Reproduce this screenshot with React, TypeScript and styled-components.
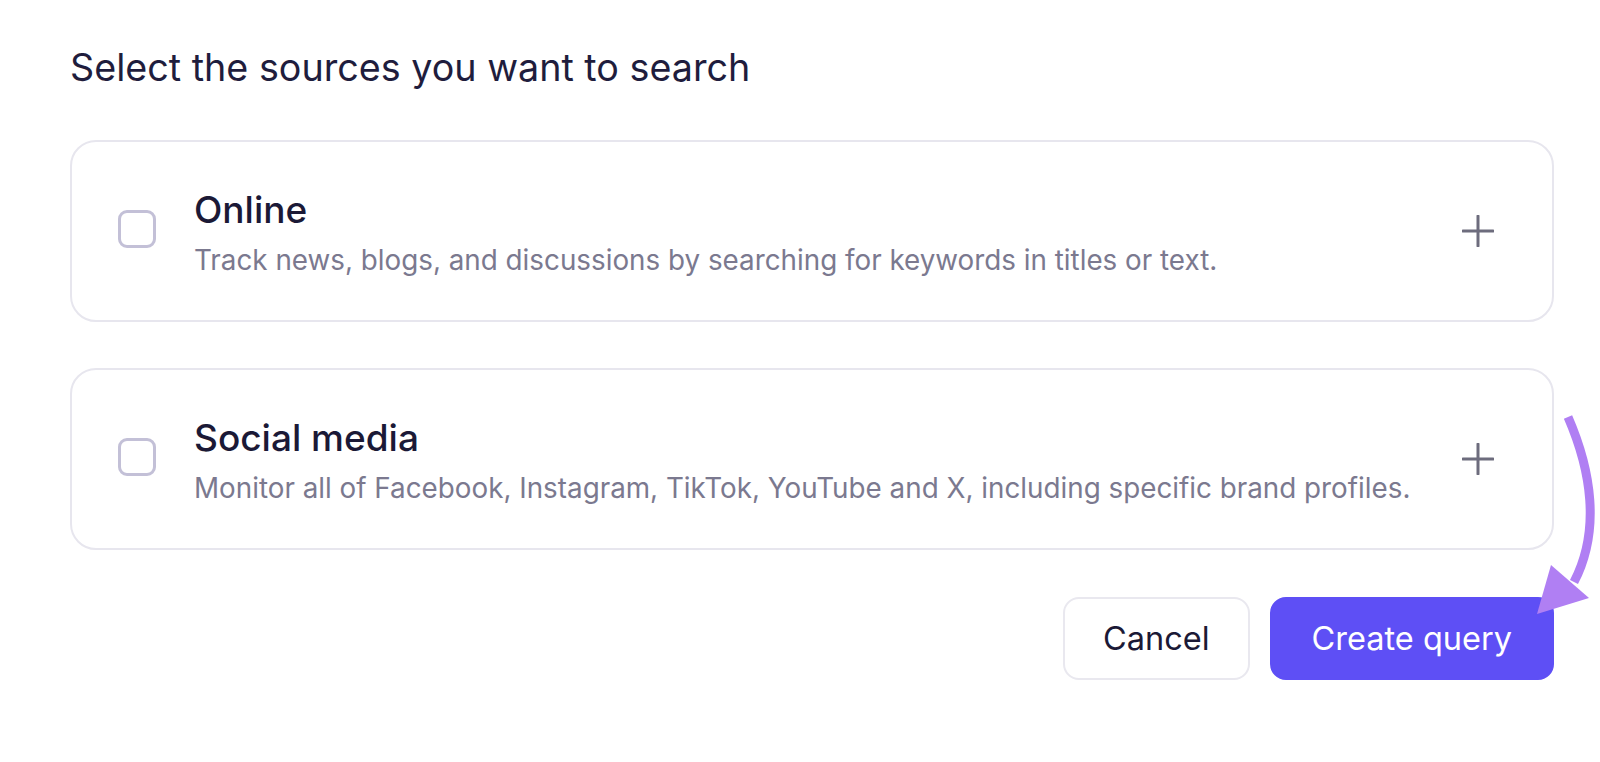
import React from 'react';
import styled, { createGlobalStyle } from 'styled-components';

const GlobalStyle = createGlobalStyle`
  html, body {
    margin: 0;
    padding: 0;
    background: #ffffff;
    font-family: Inter, "Noto Sans", sans-serif;
  }
`;

const Page = styled.div`
  position: relative;
  width: 1600px;
  height: 762px;
  overflow: hidden;
  padding: 42px 46px 0 70px;
  box-sizing: border-box;
`;

const Heading = styled.h2`
  margin: 0 0 48px;
  font-size: 37.7px;
  font-weight: 400;
  line-height: 50px;
  color: #1f1d3d;
`;

const CardList = styled.div`
  display: flex;
  flex-direction: column;
  gap: 46px;
`;

const Card = styled.div`
  display: flex;
  align-items: center;
  height: 182px;
  box-sizing: border-box;
  padding: 0 58px 0 46px;
  border: 2px solid #e7e6ee;
  border-radius: 26px;
  background: #fff;
`;

const Checkbox = styled.span`
  flex: none;
  width: 38px;
  height: 38px;
  box-sizing: border-box;
  border: 3.5px solid #c3c0d7;
  border-radius: 9px;
  margin-right: 38px;
  margin-top: -4px;
`;

const CardText = styled.div`
  flex: 1;
  display: flex;
  flex-direction: column;
  margin-top: 4px;
`;

const CardTitle = styled.div`
  font-size: 37px;
  font-weight: 500;
  line-height: 44px;
  color: #1b1936;
`;

const CardDesc = styled.div`
  margin-top: 10px;
  font-size: 27.8px;
  line-height: 36px;
  color: #7b798f;
`;

const Actions = styled.div`
  display: flex;
  justify-content: flex-end;
  gap: 20px;
  margin-top: 47px;
`;

const Button = styled.button<{ $primary?: boolean }>`
  height: 83px;
  padding: 0 ${p => (p.$primary ? 40 : 38)}px;
  border-radius: 16px;
  font-family: Inter, "Noto Sans", sans-serif;
  font-size: 32.5px;
  font-weight: 400;
  border: 2px solid ${p => (p.$primary ? '#5e4ff5' : '#e9e8ef')};
  background: ${p => (p.$primary ? '#5e4ff5' : '#fff')};
  color: ${p => (p.$primary ? '#ffffff' : '#1b1936')};
`;

const Arrow = styled.svg`
  position: absolute;
  left: 1520px;
  top: 400px;
  pointer-events: none;
`;

const PlusIcon = () => (
  <svg width="32" height="32" viewBox="0 0 32 32" style={{ flex: 'none' }}>
    <path d="M16 1v30M1 16h30" stroke="#6d6c7d" strokeWidth="3" strokeLinecap="round" />
  </svg>
);

const sources = [
  {
    title: 'Online',
    desc: 'Track news, blogs, and discussions by searching for keywords in titles or text.',
  },
  {
    title: 'Social media',
    desc: 'Monitor all of Facebook, Instagram, TikTok, YouTube and X, including specific brand profiles.',
  },
];

const App: React.FC = () => {
  return (
    <>
      <GlobalStyle />
      <Page>
        <Heading>Select the sources you want to search</Heading>
        <CardList>
          {sources.map(s => (
            <Card key={s.title}>
              <Checkbox />
              <CardText>
                <CardTitle>{s.title}</CardTitle>
                <CardDesc>{s.desc}</CardDesc>
              </CardText>
              <PlusIcon />
            </Card>
          ))}
        </CardList>
        <Actions>
          <Button>Cancel</Button>
          <Button $primary>Create query</Button>
        </Actions>
        <Arrow width="80" height="230" viewBox="1520 400 80 230">
          <path
            d="M1568 417 C1591 470, 1601 530, 1574 582"
            fill="none"
            stroke="#b07ff3"
            strokeWidth="9"
          />
          <polygon points="1537,614 1551,565 1589,598" fill="#b07ff3" />
        </Arrow>
      </Page>
    </>
  );
};

export default App;
